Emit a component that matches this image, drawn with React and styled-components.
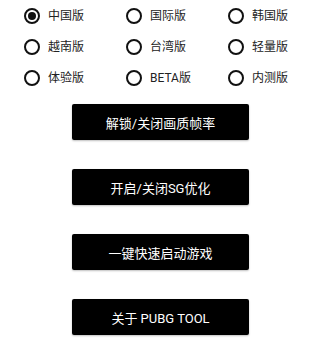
import React, { useState } from 'react';
import styled, { createGlobalStyle } from 'styled-components';

const versions = ['中国版', '国际版', '韩国版', '越南版', '台湾版', '轻量版', '体验版', 'BETA版', '内测版'];
const actions = ['解锁/关闭画质帧率', '开启/关闭SG优化', '一键快速启动游戏', '关于 PUBG TOOL'];

const App = () => {
  const [selected, setSelected] = useState('中国版');

  return (
    <>
      <GlobalStyle />
      <Page>
        <RadioGrid>
          {versions.map(name => (
            <RadioItem key={name} onClick={() => setSelected(name)}>
              <RadioCircle checked={selected === name} />
              <RadioLabel>{name}</RadioLabel>
            </RadioItem>
          ))}
        </RadioGrid>
        <ButtonList>
          {actions.map(label => (
            <ActionButton key={label}>{label}</ActionButton>
          ))}
        </ButtonList>
      </Page>
    </>
  );
};

const GlobalStyle = createGlobalStyle`
  body {
    margin: 0;
    background: #ffffff;
    font-family: Roboto, "Noto Sans CJK SC", sans-serif;
  }
`;

const Page = styled.div`
  width: 320px;
  height: 339px;
  overflow: hidden;
  background: #ffffff;
`;

const RadioGrid = styled.div`
  display: grid;
  grid-template-columns: repeat(3, 102px);
  grid-auto-rows: 31px;
  padding-left: 24px;
`;

const RadioItem = styled.label`
  display: flex;
  align-items: center;
  gap: 8px;
  cursor: pointer;
`;

const RadioCircle = styled.span`
  box-sizing: border-box;
  width: 16px;
  height: 16px;
  border: 2px solid #111111;
  border-radius: 50%;
  display: flex;
  align-items: center;
  justify-content: center;
  &::after {
    content: '';
    display: ${props => (props.checked ? 'block' : 'none')};
    width: 8px;
    height: 8px;
    border-radius: 50%;
    background: #111111;
  }
`;

const RadioLabel = styled.span`
  font-size: 12px;
  color: #222222;
  line-height: 1;
`;

const ButtonList = styled.div`
  display: flex;
  flex-direction: column;
  align-items: center;
  gap: 29px;
  margin-top: 11px;
`;

const ActionButton = styled.button`
  width: 177px;
  height: 36px;
  margin-left: 1px;
  border: none;
  border-radius: 2px;
  background: #000000;
  color: #ffffff;
  font-family: Roboto, "Noto Sans CJK SC", sans-serif;
  font-size: 13px;
  box-shadow: 0 1px 2px rgba(0, 0, 0, 0.25);
  cursor: pointer;
`;

export default App;
